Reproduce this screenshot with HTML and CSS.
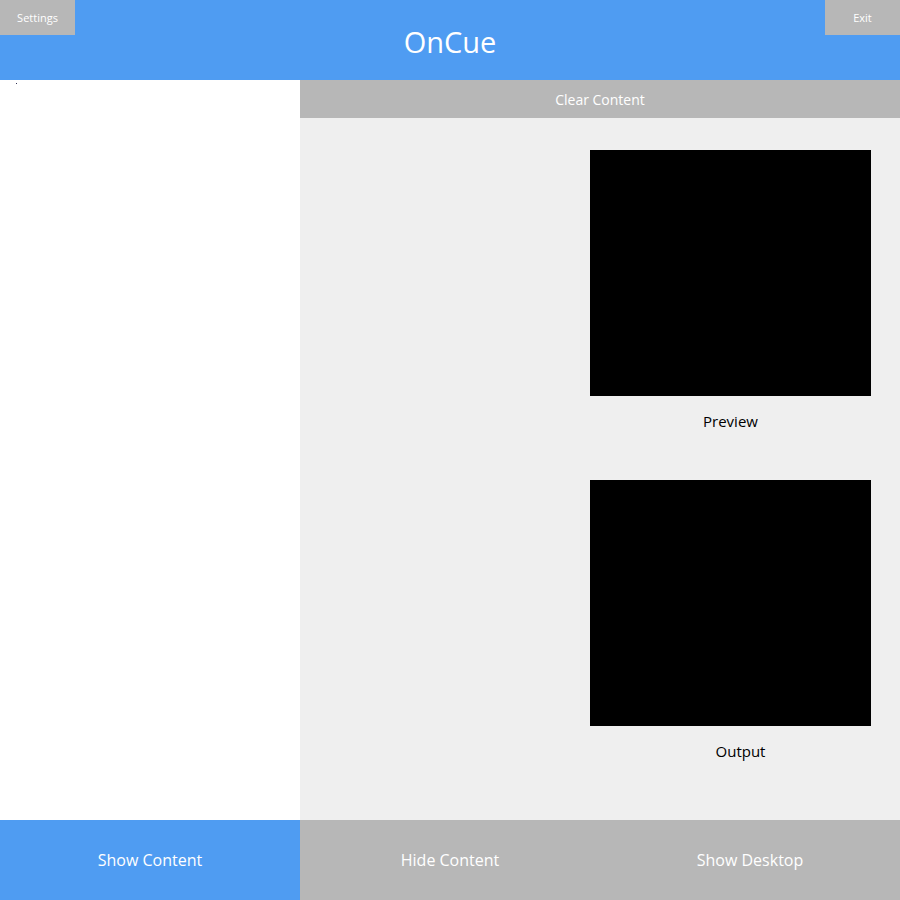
FILE: index.html
```html
<!DOCTYPE html>
<html>
<head>
<meta charset="utf-8">
<link rel="stylesheet" href="styles.css">
</head>
<body>
<div class="app">
  <header class="header">
    <div class="corner-btn">Settings</div>
    <div class="title">OnCue</div>
    <div class="corner-btn">Exit</div>
  </header>
  <main class="main">
    <aside class="left"><span class="dot"></span></aside>
    <section class="right">
      <div class="clear-bar">Clear Content</div>
      <div class="screens">
        <div class="screen">
          <div class="black"></div>
          <div class="label">Preview</div>
        </div>
        <div class="screen">
          <div class="black"></div>
          <div class="label label-output">Output</div>
        </div>
      </div>
    </section>
  </main>
  <footer class="footer">
    <div class="fbtn fbtn-blue">Show Content</div>
    <div class="fbtn">Hide Content</div>
    <div class="fbtn">Show Desktop</div>
  </footer>
</div>
</body>
</html>
```
FILE: styles.css
```css
html, body {
  margin: 0;
  padding: 0;
}
body {
  font-family: "Open Sans", "Noto Sans", "DejaVu Sans", sans-serif;
}
.app {
  width: 900px;
  height: 900px;
  display: flex;
  flex-direction: column;
}
.header {
  height: 80px;
  background: #4f9cf2;
  display: flex;
  align-items: flex-start;
  justify-content: space-between;
}
.corner-btn {
  width: 75px;
  height: 35px;
  background: #b7b7b7;
  color: #ffffff;
  font-size: 11px;
  display: flex;
  align-items: center;
  justify-content: center;
}
.title {
  color: #ffffff;
  font-size: 29px;
  line-height: 1;
  margin-top: 27px;
  font-weight: 400;
}
.main {
  flex: 1;
  display: flex;
}
.left {
  width: 300px;
  background: #ffffff;
  position: relative;
}
.dot {
  position: absolute;
  left: 16px;
  top: 3px;
  width: 1px;
  height: 1px;
  background: #333355;
}
.right {
  flex: 1;
  background: #efefef;
  display: flex;
  flex-direction: column;
}
.clear-bar {
  height: 38px;
  background: #b7b7b7;
  color: #ffffff;
  font-size: 14px;
  display: flex;
  align-items: center;
  justify-content: center;
}
.screens {
  display: flex;
  flex-direction: column;
  align-items: flex-end;
  padding: 32px 29px 0 0;
  gap: 49px;
}
.screen {
  width: 281px;
  display: flex;
  flex-direction: column;
  align-items: center;
}
.black {
  width: 281px;
  height: 246px;
  background: #000000;
}
.black + .label {
  margin-top: 15px;
}
.label {
  font-size: 15px;
  color: #000000;
  line-height: 20px;
}
.label-output {
  padding-left: 20px;
}
.footer {
  height: 80px;
  display: flex;
}
.fbtn {
  flex: 1;
  background: #b7b7b7;
  color: #ffffff;
  font-size: 16px;
  display: flex;
  align-items: center;
  justify-content: center;
}
.fbtn-blue {
  background: #4f9cf2;
}
```
